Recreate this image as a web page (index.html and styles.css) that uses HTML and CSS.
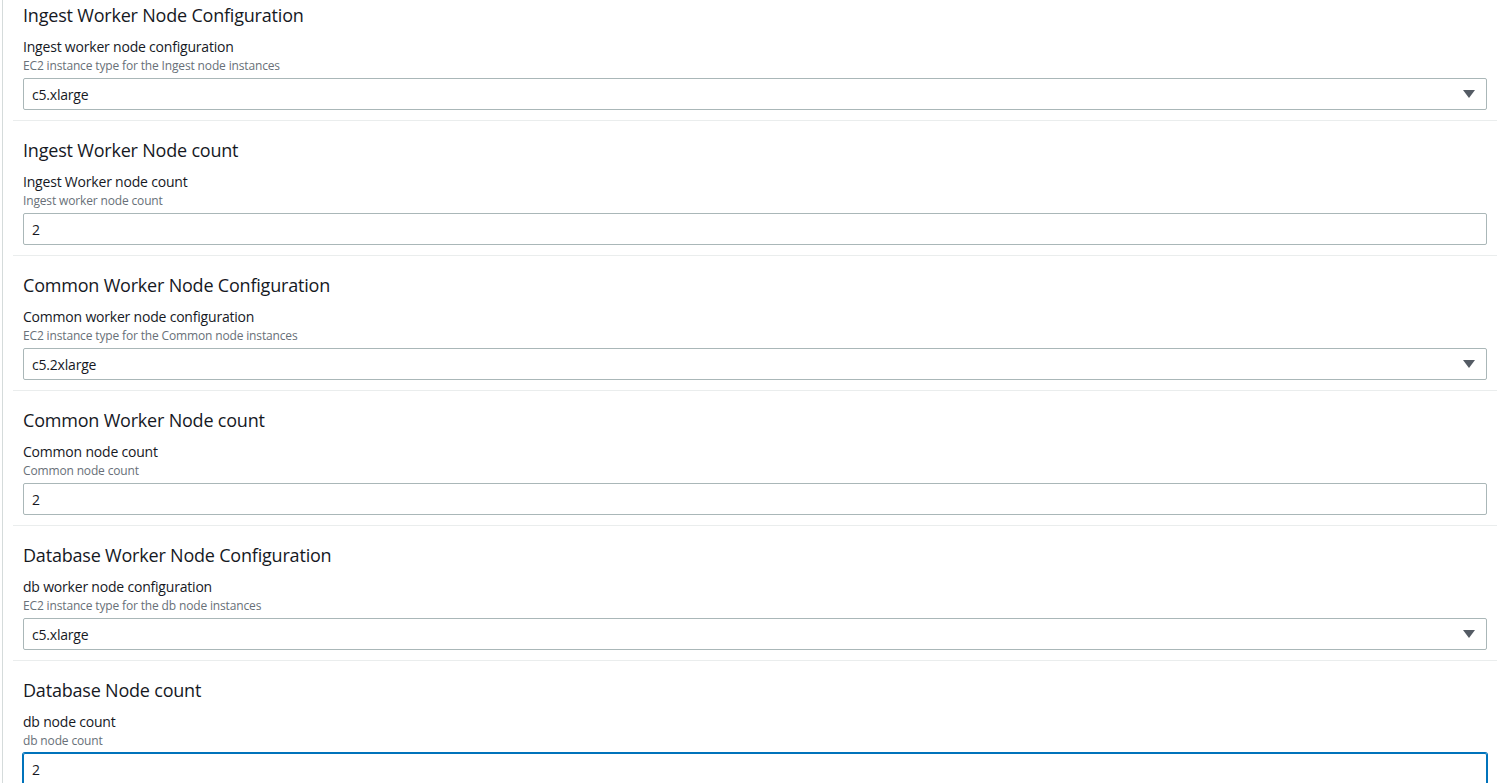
FILE: index.html
```html
<!DOCTYPE html>
<html lang="en">
<head>
<meta charset="utf-8">
<title>Worker Node Configuration</title>
<link rel="stylesheet" href="styles.css">
</head>
<body>
<div class="page">
  <div class="sections">
    <section class="section first">
      <h2 class="heading">Ingest Worker Node Configuration</h2>
      <div class="field">
        <div class="label">Ingest worker node configuration</div>
        <div class="desc">EC2 instance type for the Ingest node instances</div>
        <div class="control select"><span>c5.xlarge</span><svg class="caret" viewBox="0 0 12 8" width="12" height="8"><path d="M0 0h12L6 8z"/></svg></div>
      </div>
    </section>
    <section class="section">
      <h2 class="heading">Ingest Worker Node count</h2>
      <div class="field">
        <div class="label">Ingest Worker node count</div>
        <div class="desc">Ingest worker node count</div>
        <div class="control"><span>2</span></div>
      </div>
    </section>
    <section class="section">
      <h2 class="heading">Common Worker Node Configuration</h2>
      <div class="field">
        <div class="label">Common worker node configuration</div>
        <div class="desc">EC2 instance type for the Common node instances</div>
        <div class="control select"><span>c5.2xlarge</span><svg class="caret" viewBox="0 0 12 8" width="12" height="8"><path d="M0 0h12L6 8z"/></svg></div>
      </div>
    </section>
    <section class="section">
      <h2 class="heading">Common Worker Node count</h2>
      <div class="field">
        <div class="label">Common node count</div>
        <div class="desc">Common node count</div>
        <div class="control"><span>2</span></div>
      </div>
    </section>
    <section class="section">
      <h2 class="heading">Database Worker Node Configuration</h2>
      <div class="field">
        <div class="label">db worker node configuration</div>
        <div class="desc">EC2 instance type for the db node instances</div>
        <div class="control select"><span>c5.xlarge</span><svg class="caret" viewBox="0 0 12 8" width="12" height="8"><path d="M0 0h12L6 8z"/></svg></div>
      </div>
    </section>
    <section class="section last">
      <h2 class="heading">Database Node count</h2>
      <div class="field">
        <div class="label">db node count</div>
        <div class="desc">db node count</div>
        <div class="control focused"><span>2</span></div>
      </div>
    </section>
  </div>
</div>
</body>
</html>
```

FILE: styles.css
```css
* { box-sizing: border-box; }
html, body {
  margin: 0;
  padding: 0;
  background: #ffffff;
  height: 100%;
  overflow: hidden;
}
body {
  font-family: "Open Sans", "Noto Sans", Arial, sans-serif;
  color: #16191f;
}
.page {
  margin-left: 2px;
  border-left: 1px solid #d5dbdb;
  min-height: 100%;
  padding: 0 10px 0 10px;
}
.sections {
  display: flex;
  flex-direction: column;
}
.section {
  border-bottom: 1px solid #eaeded;
  padding: 18px 10px 10px 10px;
}
.section.first {
  padding-top: 4px;
}
.section.last {
  border-bottom: none;
}
.heading {
  margin: 0;
  font-size: 18px;
  line-height: 22px;
  font-weight: 400;
  letter-spacing: -0.2px;
  color: #16191f;
}
.field {
  margin-top: 11px;
  display: flex;
  flex-direction: column;
}
.label {
  font-size: 14px;
  line-height: 20px;
  letter-spacing: -0.2px;
  color: #16191f;
}
.desc {
  font-size: 12px;
  line-height: 18px;
  letter-spacing: -0.15px;
  color: #687078;
  margin-bottom: 3px;
}
.control {
  height: 32px;
  border: 1px solid #aab7b8;
  border-radius: 2px;
  display: flex;
  align-items: center;
  justify-content: space-between;
  padding: 0 11px 0 8px;
  font-size: 14px;
  letter-spacing: -0.2px;
  color: #16191f;
}
.control.focused {
  border-color: #0073bb;
  box-shadow: 0 0 0 1px #0073bb;
}
.caret {
  fill: #545b64;
  display: block;
}
```
